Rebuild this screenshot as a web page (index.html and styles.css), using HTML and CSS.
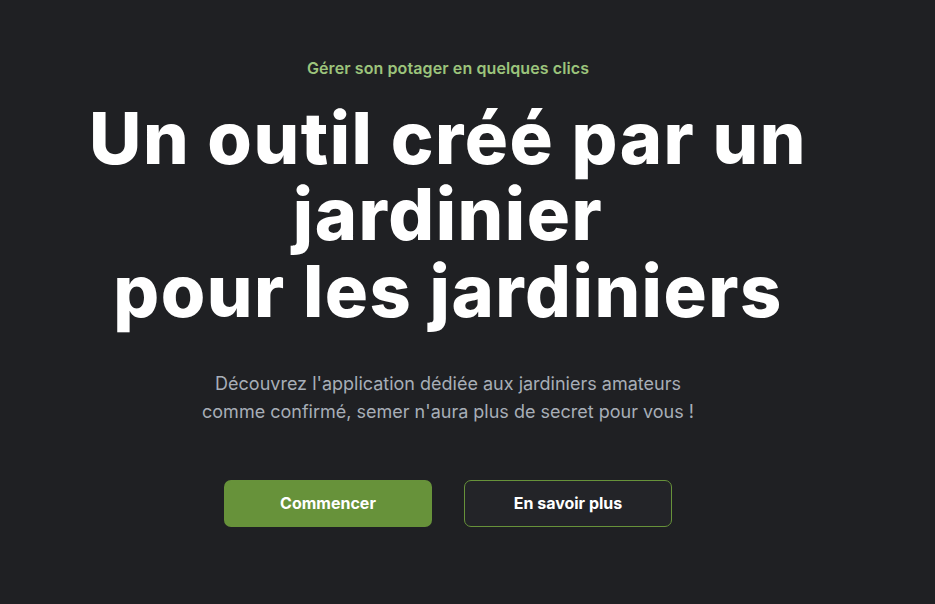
FILE: index.html
```html
<!DOCTYPE html>
<html lang="fr">
<head>
<meta charset="utf-8">
<title>Potager</title>
<link rel="stylesheet" href="styles.css">
</head>
<body>
<main class="hero">
  <p class="eyebrow">Gérer son potager en quelques clics</p>
  <h1 class="title">Un outil créé par un jardinier<br>pour les jardiniers</h1>
  <p class="lead">Découvrez l'application dédiée aux jardiniers amateurs<br>comme confirmé, semer n'aura plus de secret pour vous !</p>
  <div class="actions">
    <a class="btn btn-primary" href="#">Commencer</a>
    <a class="btn btn-outline" href="#">En savoir plus</a>
  </div>
</main>
</body>
</html>
```
FILE: styles.css
```css
html, body {
  margin: 0;
  padding: 0;
  background: #1f2023;
  font-family: Inter, "Noto Sans", sans-serif;
}
.hero {
  max-width: 896px;
  display: flex;
  flex-direction: column;
  align-items: center;
  text-align: center;
  padding-top: 57px;
}
.eyebrow {
  margin: 0;
  color: #9cc47c;
  font-size: 16px;
  font-weight: 600;
  line-height: 22px;
  letter-spacing: 0.1px;
}
.title {
  margin: 21px 0 0;
  width: 780px;
  color: #ffffff;
  font-size: 72px;
  font-weight: 800;
  line-height: 1.06;
  letter-spacing: 1.5px;
}
.lead {
  margin: 41px 0 0;
  color: #a7aeb7;
  font-size: 18px;
  line-height: 28px;
}
.actions {
  margin-top: 54px;
  display: flex;
  gap: 32px;
}
.btn {
  box-sizing: border-box;
  width: 208px;
  height: 47px;
  display: flex;
  align-items: center;
  justify-content: center;
  border-radius: 7px;
  color: #ffffff;
  font-size: 16px;
  font-weight: 700;
  text-decoration: none;
}
.btn-primary {
  background: #67923a;
}
.btn-outline {
  background: #232428;
  border: 1px solid #67923a;
}
```
